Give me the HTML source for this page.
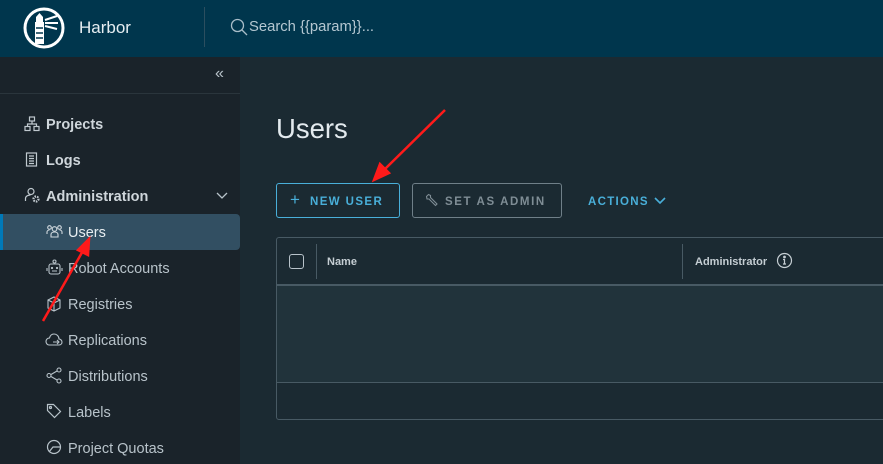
<!DOCTYPE html>
<html><head><meta charset="utf-8"><style>
*{margin:0;padding:0;box-sizing:border-box}
body{width:883px;height:464px;overflow:hidden;background:#1b2a32;font-family:"Liberation Sans",sans-serif;position:relative}
.hdr{position:absolute;left:0;top:0;width:883px;height:57px;background:#00364d}
.side{position:absolute;left:0;top:57px;width:240px;height:407px;background:#1a232a}
.t{position:absolute;white-space:nowrap}
.nav{position:absolute;left:46px;font-size:14.5px;color:#cfd6db}
.sub{position:absolute;left:68px;font-size:14.5px;color:#b8c3ca}
.ic{position:absolute}
</style></head><body>
<div class="hdr">
<svg class="ic" style="left:23px;top:7px" width="42" height="42" viewBox="0 0 42 42"><circle cx="21" cy="21" r="19" fill="none" stroke="#fff" stroke-width="3"/><path d="M12 15h9v22h-9z" fill="#fff"/><path d="M13 10l3.5-4 3.5 4v5h-7z" fill="#fff"/><path d="M22 13l12-4M22 16l13 0M22 19l12 3" stroke="#fff" stroke-width="2"/><path d="M13 21h7M13 26h7M13 31h7" stroke="#00364d" stroke-width="1.5"/></svg>
<div class="t" style="left:79px;top:18px;font-size:17px;color:#e6eef2">Harbor</div>
<div style="position:absolute;left:204px;top:7px;width:1px;height:40px;background:#2b4e5f"></div>
<svg class="ic" style="left:230px;top:18px" width="18" height="18" viewBox="0 0 18 18"><circle cx="7.5" cy="7.5" r="6" fill="none" stroke="#a9bdc8" stroke-width="1.3"/><path d="M12 12l5 5" stroke="#a9bdc8" stroke-width="1.3"/></svg>
<div class="t" style="left:249px;top:19px;font-size:14.8px;color:#b4c7d1">Search {{param}}...</div>
</div>
<div class="side">
<div class="t" style="left:215px;top:8px;font-size:16px;color:#b8c3ca">«</div>
<div style="position:absolute;left:0;top:36px;width:240px;height:1px;background:#2a353c"></div>
</div>
<svg class="ic" style="left:24px;top:116px" width="16" height="16" viewBox="0 0 16 16" fill="none" stroke="#c0c9cf" stroke-width="1.2"><rect x="5.5" y="1" width="5" height="4"/><rect x="1" y="10.5" width="5" height="4"/><rect x="10" y="10.5" width="5" height="4"/><path d="M8 5v3M3.5 10.5V8h9v2.5"/></svg>
<div class="nav t" style="top:117px;font-weight:bold">Projects</div>
<svg class="ic" style="left:25px;top:152px" width="14" height="16" viewBox="0 0 14 16" fill="none" stroke="#c0c9cf" stroke-width="1.2"><rect x="1.5" y="1" width="10" height="13"/><path d="M4 4h5M4 6.5h5M4 9h5M4 11.5h5"/></svg>
<div class="nav t" style="top:153px;font-weight:bold">Logs</div>
<svg class="ic" style="left:24px;top:187px" width="17" height="17" viewBox="0 0 17 17" fill="none" stroke="#c0c9cf" stroke-width="1.2"><circle cx="7" cy="4.5" r="3"/><path d="M1.5 14v-2.5c0-2 2-3.5 5-3.5"/><circle cx="12" cy="12" r="2.5" stroke-width="2.2" stroke-dasharray="1.5 1"/></svg>
<div class="nav t" style="top:189px;font-weight:bold">Administration</div>
<svg class="ic" style="left:216px;top:192px" width="12" height="8" viewBox="0 0 12 8"><path d="M1 1l5 5 5-5" fill="none" stroke="#b8c3ca" stroke-width="1.3"/></svg>
<div style="position:absolute;left:0;top:214px;width:240px;height:36px;background:#324f62;border-radius:0 4px 4px 0"></div>
<div style="position:absolute;left:0;top:214px;width:3px;height:36px;background:#0079b8"></div>
<svg class="ic" style="left:46px;top:224px" width="17" height="15" viewBox="0 0 17 15" fill="none" stroke="#d0d8dd" stroke-width="1.1"><circle cx="8.5" cy="5" r="2.3"/><circle cx="3.5" cy="3.5" r="1.8"/><circle cx="13.5" cy="3.5" r="1.8"/><path d="M5 13v-2.5c0-1.5 1.5-2.5 3.5-2.5s3.5 1 3.5 2.5V13zM1 10V8c0-1 1-2 2.5-2M16 10V8c0-1-1-2-2.5-2"/></svg>
<div class="sub t" style="top:225px;color:#e8eef1">Users</div>
<svg class="ic" style="left:46px;top:259px" width="17" height="17" viewBox="0 0 17 17" fill="none" stroke="#b8c3ca" stroke-width="1.1"><rect x="3" y="5" width="11" height="10" rx="2"/><circle cx="8.5" cy="2.5" r="1.5"/><path d="M1 9v3M16 9v3M6 12h5"/><circle cx="6" cy="9" r=".6"/><circle cx="11" cy="9" r=".6"/></svg>
<div class="sub t" style="top:261px">Robot Accounts</div>
<svg class="ic" style="left:46px;top:296px" width="16" height="16" viewBox="0 0 16 16" fill="none" stroke="#b8c3ca" stroke-width="1.1"><path d="M2 4l6-3 6 3v8l-6 3-6-3zM2 4l6 3 6-3M8 7v8"/></svg>
<div class="sub t" style="top:297px">Registries</div>
<svg class="ic" style="left:45px;top:332px" width="18" height="15" viewBox="0 0 18 15" fill="none" stroke="#b8c3ca" stroke-width="1.1"><path d="M4 13h10c2 0 3-1.5 3-3s-1.5-3-3-3c0-3-2.5-5-5-5S5 4 4.5 6C2.5 6 1 7.5 1 9.5S2.5 13 4 13zM8 10h6M12 8l2 2-2 2"/></svg>
<div class="sub t" style="top:333px">Replications</div>
<svg class="ic" style="left:46px;top:367px" width="16" height="17" viewBox="0 0 16 17" fill="none" stroke="#b8c3ca" stroke-width="1.1"><circle cx="3" cy="8.5" r="2"/><circle cx="13" cy="3" r="2"/><circle cx="13" cy="14" r="2"/><path d="M5 7.5l6-3.5M5 9.5l6 3.5"/></svg>
<div class="sub t" style="top:369px">Distributions</div>
<svg class="ic" style="left:46px;top:403px" width="16" height="16" viewBox="0 0 16 16" fill="none" stroke="#b8c3ca" stroke-width="1.2"><path d="M1.5 1.5h6l7 7-6 6-7-7z"/><circle cx="4.5" cy="4.5" r="1"/></svg>
<div class="sub t" style="top:405px">Labels</div>
<svg class="ic" style="left:46px;top:439px" width="16" height="16" viewBox="0 0 16 16" fill="none" stroke="#b8c3ca" stroke-width="1.2"><circle cx="8" cy="8" r="6.5"/><path d="M3 13l4-5h7"/></svg>
<div class="sub t" style="top:441px">Project Quotas</div>

<div class="t" style="left:276px;top:113px;font-size:27.5px;color:#e3eaee">Users</div>
<div style="position:absolute;left:276px;top:183px;width:124px;height:35px;border:1px solid #49afd9;border-radius:3px"></div>
<div class="t" style="left:290px;top:190px;font-size:17px;color:#49afd9">+</div>
<div class="t" style="left:310px;top:196px;font-size:11.5px;letter-spacing:1.4px;color:#49afd9;font-weight:bold">NEW USER</div>
<div style="position:absolute;left:412px;top:183px;width:150px;height:35px;border:1px solid #6f7f88;border-radius:3px"></div>
<svg class="ic" style="left:425px;top:193px" width="14" height="14" viewBox="0 0 14 14" fill="none" stroke="#7f8d95" stroke-width="1.1"><path d="M1.5 3.5l2-2 2 1v2l6.5 6.5-1.5 1.5-6.5-6.5h-2z"/></svg>
<div class="t" style="left:445px;top:196px;font-size:11.5px;letter-spacing:1.6px;color:#7f8d95;font-weight:bold">SET AS ADMIN</div>
<div class="t" style="left:588px;top:196px;font-size:11.5px;letter-spacing:1.3px;color:#49afd9;font-weight:bold">ACTIONS</div>
<svg class="ic" style="left:654px;top:197px" width="12" height="8" viewBox="0 0 12 8"><path d="M1 1l5 5 5-5" fill="none" stroke="#49afd9" stroke-width="1.6"/></svg>

<div style="position:absolute;left:276px;top:237px;width:620px;height:183px;border:1px solid #485a64;border-radius:3px;background:#1b2a32"></div>
<div style="position:absolute;left:277px;top:284px;width:606px;height:2px;background:#485a64"></div>
<div style="position:absolute;left:277px;top:286px;width:606px;height:96px;background:#21333b"></div>
<div style="position:absolute;left:277px;top:382px;width:606px;height:1px;background:#485a64"></div>
<div style="position:absolute;left:289px;top:254px;width:15px;height:15px;border:1px solid #b8c3ca;border-radius:3px"></div>
<div style="position:absolute;left:316px;top:244px;width:1px;height:35px;background:#485a64"></div>
<div style="position:absolute;left:682px;top:244px;width:1px;height:35px;background:#485a64"></div>
<div class="t" style="left:327px;top:256px;font-size:11px;font-weight:bold;color:#c5ced3">Name</div>
<div class="t" style="left:695px;top:256px;font-size:11px;font-weight:bold;color:#c5ced3">Administrator</div>
<svg class="ic" style="left:776px;top:252px" width="17" height="17" viewBox="0 0 17 17" fill="none" stroke="#c5ced3" stroke-width="1.2"><circle cx="8.5" cy="8.5" r="7"/><path d="M7 7.5h1.5v4.5M7 12h3"/><circle cx="8.5" cy="5" r=".8" fill="#c5ced3"/></svg>

<svg class="ic" style="left:0;top:0" width="883" height="464"><g stroke="#ff1a1a" stroke-width="2.5" fill="#ff1a1a"><path d="M445 110L385 169"/><path d="M374 180l6-16 9 9z"/><path d="M43 321L84 249"/><path d="M89 239l-1 16-10-5z"/></g></svg>
</body></html>
